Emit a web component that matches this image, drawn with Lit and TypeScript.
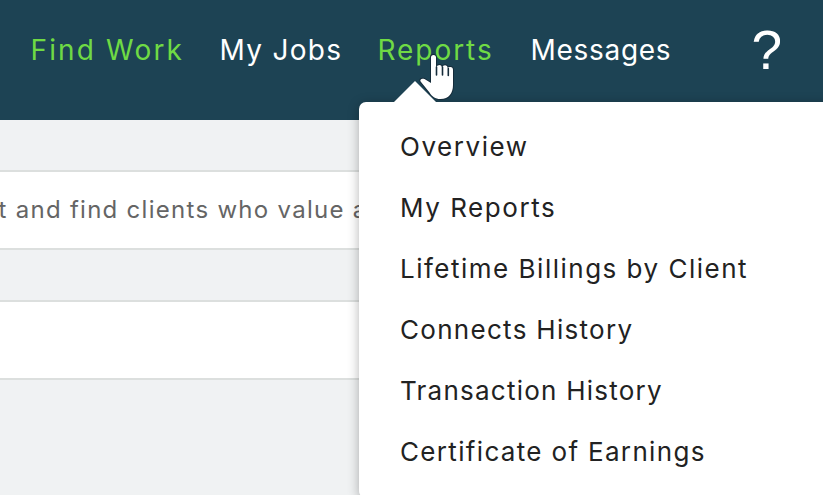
import { LitElement, html, css } from "lit";

interface Entry {
  label: string;
  tracking: number;
  active?: boolean;
}

const NAV: Entry[] = [
  { label: "Find Work", tracking: 2.15, active: true },
  { label: "My Jobs", tracking: 1.3 },
  { label: "Reports", tracking: 1.95, active: true },
  { label: "Messages", tracking: 0.7 },
];

const MENU: Entry[] = [
  { label: "Overview", tracking: 1.55 },
  { label: "My Reports", tracking: 1.55 },
  { label: "Lifetime Billings by Client", tracking: 1.5 },
  { label: "Connects History", tracking: 1.3 },
  { label: "Transaction History", tracking: 1.24 },
  { label: "Certificate of Earnings", tracking: 1.33 },
];

class AppRoot extends LitElement {
  static styles = css`
    :host {
      display: block;
      position: relative;
      height: 495px;
      overflow: hidden;
      background: #f0f2f3;
      font-family: Inter, "Liberation Sans", sans-serif;
    }
    header {
      display: flex;
      height: 120px;
      box-sizing: border-box;
      padding-left: 30.5px;
      background: #1d4354;
      color: #fff;
    }
    nav {
      display: grid;
      grid-template-columns: 189px 158px 153px 221px;
      font-size: 28px;
      line-height: 40px;
      padding-top: 30px;
      white-space: nowrap;
    }
    .active {
      color: #6fda44;
    }
    .help {
      font: 55px/60px "Liberation Sans", sans-serif;
      padding-top: 20px;
    }
    .panel {
      box-sizing: border-box;
      height: 80px;
      margin-top: 50px;
      border-top: 2px solid #dcdfde;
      border-bottom: 2px solid #dcdfde;
      background: #fff;
      color: #656565;
      font-size: 24px;
      line-height: 76px;
      letter-spacing: 1.28px;
      white-space: nowrap;
    }
    .panel span {
      margin-left: -1.5px;
    }
    .menu {
      position: absolute;
      left: 359px;
      top: 102px;
      width: 480px;
      height: 396px;
      box-sizing: border-box;
      margin: 0;
      padding: 14px 0 0 41px;
      list-style: none;
      border-radius: 7px;
      background: #fff;
      color: #222;
      box-shadow: 0 2px 12px rgba(0, 0, 0, 0.3);
      font-size: 26px;
      line-height: 61px;
      white-space: nowrap;
    }
    .overlay {
      position: absolute;
      left: 390px;
      top: 50px;
    }
  `;

  render() {
    return html`
      <header>
        <nav>
          ${NAV.map(
            (n) => html`<span class=${n.active ? "active" : ""} style="letter-spacing:${n.tracking}px">${n.label}</span>`
          )}
        </nav>
        <span class="help">?</span>
      </header>
      <section class="panel"><span>t and find clients who value a</span></section>
      <section class="panel"></section>
      <ul class="menu">
        ${MENU.map((m) => html`<li style="letter-spacing:${m.tracking}px">${m.label}</li>`)}
      </ul>
      <svg class="overlay" width="70" height="53" viewBox="390 50 70 53">
        <path d="M393 103 415 81 437 103Z" fill="#fff" />
        <path
          d="M431 57.500a2.500 2.500 0 0 1 5 0V67.500q1-2.500 3.300-2.500 2.200 0 2.700 2.200 1-2 3-2 2.300 0 2.700 2.800 1-1 2.600-.9 2.700.2 2.700 3V85c0 8-4 14-12.500 14-5.500 0-8.500-2.500-11-6.500l-8.500-10.500c-2-2.500 1-4 3.500-3l6.500 4Z"
          fill="#fff"
          stroke="#152b3a"
          stroke-width="2"
          stroke-linejoin="round"
          paint-order="stroke"
        />
        <path d="M436.500 67v8M442.500 67v8M448.300 68.500V75.500" stroke="#152b3a" stroke-width="1.600" stroke-linecap="round" />
      </svg>
    `;
  }
}
customElements.define("app-root", AppRoot);
